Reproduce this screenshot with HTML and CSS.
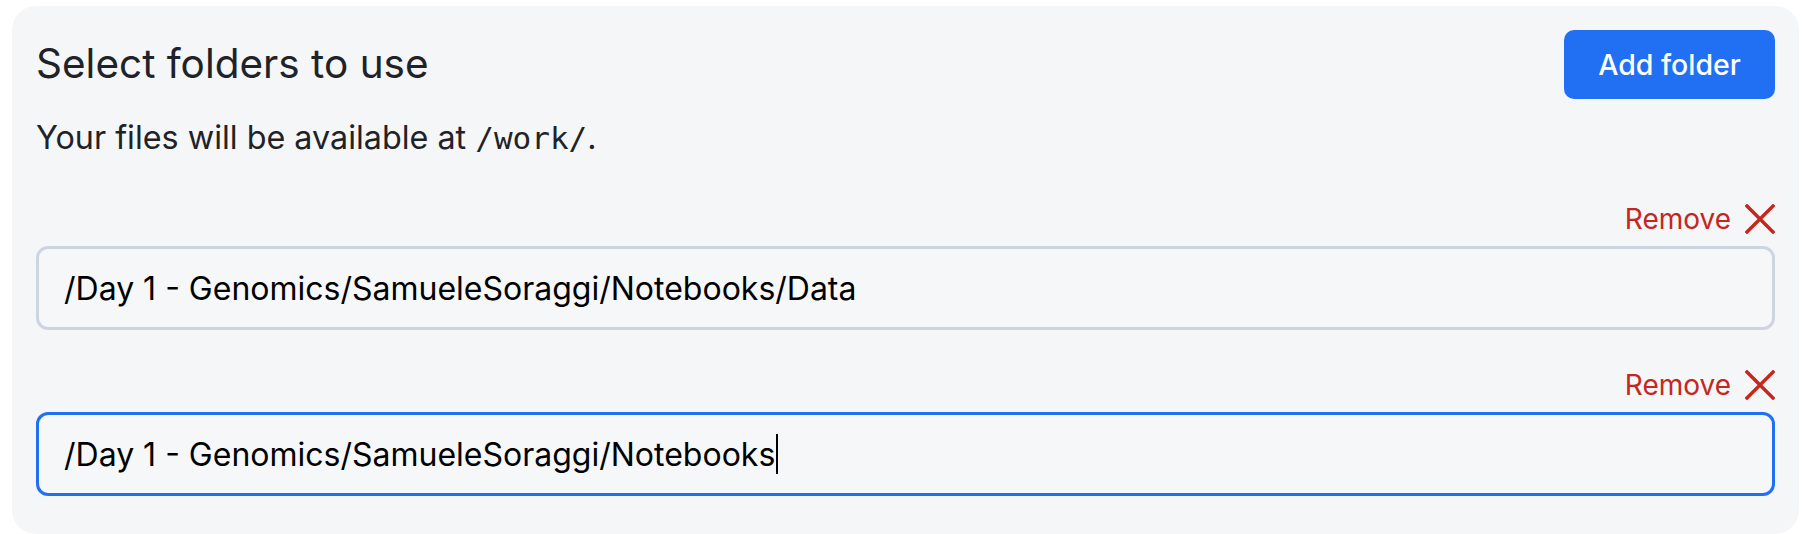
FILE: index.html
```html
<!DOCTYPE html>
<html lang="en">
<head>
<meta charset="utf-8">
<title>Select folders to use</title>
<link rel="stylesheet" href="styles.css">
</head>
<body>
  <section class="card">
    <header class="card-header">
      <h2 class="title">Select folders to use</h2>
      <button class="btn-primary" type="button">Add folder</button>
    </header>
    <p class="subtitle">Your files will be available at <code class="mono">/work/</code>.</p>

    <div class="folder">
      <div class="folder-actions">
        <button class="remove" type="button">Remove
          <svg class="remove-icon" viewBox="0 0 30 30" width="30" height="30" aria-hidden="true">
            <path d="M2 2 L28 28 M28 2 L2 28" stroke="currentColor" stroke-width="3.4" fill="none" stroke-linecap="square"/>
          </svg>
        </button>
      </div>
      <div class="field"><span class="field-text">/Day 1 - Genomics/SamueleSoraggi/Notebooks/Data</span></div>
    </div>

    <div class="folder">
      <div class="folder-actions">
        <button class="remove" type="button">Remove
          <svg class="remove-icon" viewBox="0 0 30 30" width="30" height="30" aria-hidden="true">
            <path d="M2 2 L28 28 M28 2 L2 28" stroke="currentColor" stroke-width="3.4" fill="none" stroke-linecap="square"/>
          </svg>
        </button>
      </div>
      <div class="field field-focused"><span class="field-text">/Day 1 - Genomics/SamueleSoraggi/Notebooks</span><span class="caret"></span></div>
    </div>
  </section>
</body>
</html>
```

FILE: styles.css
```css
* {
  box-sizing: border-box;
}

html, body {
  margin: 0;
  background: #ffffff;
}

body {
  padding: 6px 9px 0 12px;
  font-family: "Inter", "Noto Sans", sans-serif;
  color: #1f2328;
}

.card {
  background: #f5f6f8;
  border-radius: 24px;
  padding: 24px 24px 38px 24px;
  height: 528px;
}

.card-header {
  display: flex;
  align-items: center;
  justify-content: space-between;
  height: 69px;
}

.title {
  margin: 0;
  font-size: 40.5px;
  font-weight: 400;
  line-height: 1.2;
  color: #1f2328;
}

.btn-primary {
  height: 69px;
  width: 211px;
  border: none;
  border-radius: 10px;
  background: #2170f4;
  color: #ffffff;
  font-family: "Inter", "Noto Sans", sans-serif;
  font-size: 28.5px;
  font-weight: 500;
  cursor: pointer;
}

.subtitle {
  margin: 15px 0 0 0;
  font-size: 32.3px;
  line-height: 48px;
  color: #1f2328;
}

.mono {
  font-family: "DejaVu Sans Mono", "Liberation Mono", monospace;
  font-size: 31px;
}

.folder {
  margin-top: 42px;
}

.folder + .folder {
  margin-top: 40px;
}

.folder-actions {
  display: flex;
  justify-content: flex-end;
  height: 30px;
  margin-bottom: 12px;
}

.remove {
  display: flex;
  align-items: center;
  gap: 14px;
  padding: 0;
  border: none;
  background: none;
  color: #c4271d;
  font-family: "Inter", "Noto Sans", sans-serif;
  font-size: 28px;
  line-height: 30px;
  cursor: pointer;
}

.remove-icon {
  display: block;
  width: 30px;
  height: 30px;
}

.field {
  display: flex;
  align-items: center;
  height: 84px;
  padding: 0 25px;
  border: 3px solid #ccd5e0;
  border-radius: 12px;
  background: #f6f7f9;
  color: #000000;
  font-size: 32px;
}

.field-focused {
  border-color: #2170f4;
}

.field-text {
  white-space: pre;
}

.caret {
  display: inline-block;
  width: 2px;
  height: 40px;
  margin-left: 1px;
  background: #000000;
}
```
